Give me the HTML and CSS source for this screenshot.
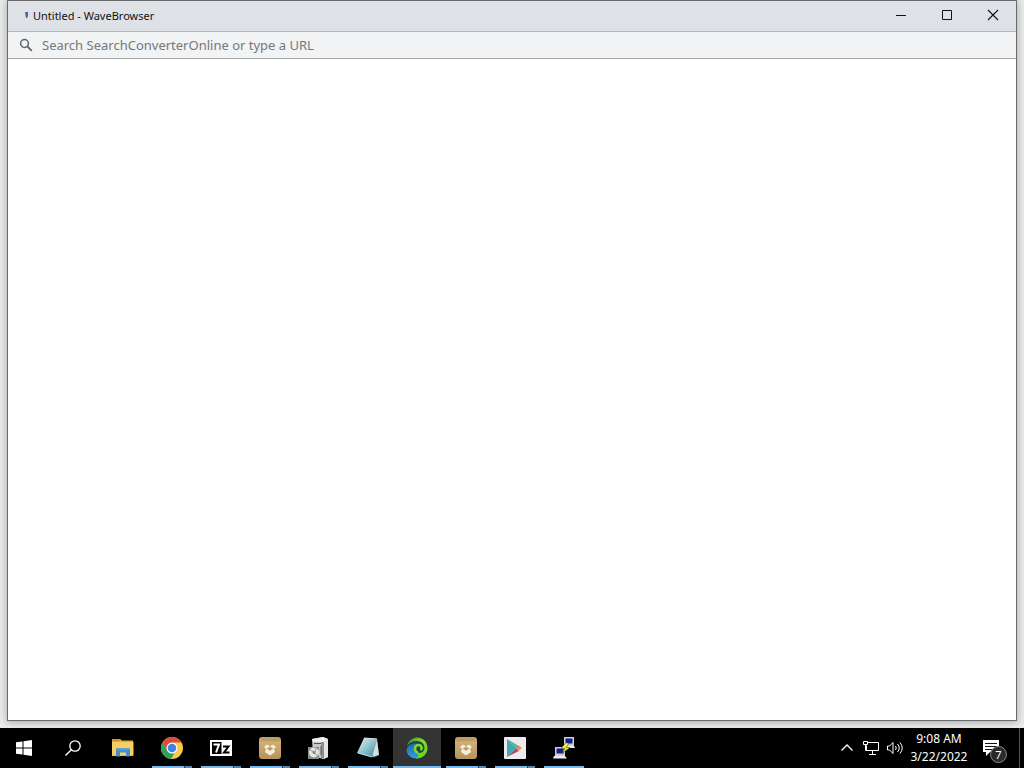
FILE: index.html
```html
<!DOCTYPE html>
<html lang="en">
<head>
<meta charset="utf-8">
<title>Untitled - WaveBrowser</title>
<link rel="stylesheet" href="styles.css">
</head>
<body>
<svg class="defs" aria-hidden="true">
  <defs>
    <linearGradient id="tan" x1="0" y1="0" x2="0" y2="1"><stop offset="0" stop-color="#a98345"/><stop offset=".25" stop-color="#cfae75"/><stop offset="1" stop-color="#b5935a"/></linearGradient>
    <linearGradient id="note" x1="0" y1="0" x2="1" y2="1"><stop offset="0" stop-color="#e4f4f6"/><stop offset=".5" stop-color="#8fc3cd"/><stop offset="1" stop-color="#3f8797"/></linearGradient>
    <linearGradient id="sea" x1="0" y1="0" x2="0" y2="1"><stop offset="0" stop-color="#2668a8"/><stop offset="1" stop-color="#2aa3e6"/></linearGradient>
    <linearGradient id="leaf" x1="0" y1="0" x2="1" y2="1"><stop offset="0" stop-color="#2f7f4b"/><stop offset=".45" stop-color="#86dc38"/><stop offset="1" stop-color="#62cf14"/></linearGradient>
    <symbol id="box" viewBox="0 0 24 24">
      <rect x="1" y="1" width="22" height="22" rx="3" fill="url(#tan)"/>
      <path d="M2 4q0-2 2-2h16q2 0 2 2" fill="none" stroke="#d0b27c"/>
      <path d="M9 8.500l3 2 3-2 3 2.500-2 2 1 3-5 3.500L7 16l1-3-2-2z" fill="#f6eedd"/>
      <path d="M12 10.500l3.500 2-3.500 2.500-3.500-2.500z" fill="#c09f68"/>
    </symbol>
  </defs>
</svg>
<main class="desktop">
  <section class="window">
    <header class="titlebar">
      <svg class="favicon" viewBox="0 0 4 8"><path d="M1 0h3v4L3 6H2z" fill="#4166b0"/></svg>
      <h1 class="title">Untitled - WaveBrowser</h1>
      <button class="control" aria-label="Minimize"><svg viewBox="0 0 12 12"><path d="M1 6.500h10" stroke="#111"/></svg></button>
      <button class="control" aria-label="Maximize"><svg viewBox="0 0 12 12"><path d="M1.500 1.500h9v9h-9z" fill="none" stroke="#111"/></svg></button>
      <button class="control" aria-label="Close"><svg viewBox="0 0 12 12"><path d="M1 1l10 10M11 1L1 11" stroke="#111" stroke-width="1.100"/></svg></button>
    </header>
    <form class="toolbar">
      <svg class="lens" viewBox="0 0 14 14"><circle cx="5.500" cy="5.500" r="3.900" fill="none" stroke="#5f6368" stroke-width="1.500"/><path d="M8.300 8.300l4.500 4.500" stroke="#5f6368" stroke-width="1.800"/></svg>
      <input class="address" type="text" aria-label="Address" placeholder="Search SearchConverterOnline or type a URL">
    </form>
    <div class="page"></div>
  </section>
</main>
<footer class="taskbar">
  <nav class="apps">
    <button class="app start" aria-label="Start"><svg class="small" viewBox="0 0 16 16"><path d="M0 2.300L6.500 1.400V7.500H0zM7.500 1.200L16 0v7.500H7.500zM0 8.500h6.500v6.100L0 13.700zM7.500 8.500H16V16l-8.500-1.200z" fill="#fff"/></svg></button>
    <button class="app search" aria-label="Search"><svg class="small" viewBox="0 0 16 16"><circle cx="10" cy="6" r="5.200" fill="none" stroke="#fff" stroke-width="1.300"/><path d="M6.300 9.700L.5 15.500" stroke="#fff" stroke-width="1.400"/></svg></button>
    <button class="app" aria-label="File Explorer"><svg viewBox="0 0 24 24"><path d="M1 3h8l2 1.500h11V20H1z" fill="#e0a93a"/><path d="M1 6h21.500v13.500H1z" fill="#f5cf63"/><path d="M1.500 4h7" stroke="#b98422"/><path d="M5 13.500q0-1.500 1.500-1.500h11q1.500 0 1.500 1.500V20.500h-4v-4H9v4H5z" fill="#4590c8"/><path d="M6 13h12" stroke="#69b4e3"/></svg></button>
    <button class="app open stack" aria-label="Chrome"><svg viewBox="0 0 24 24"><circle cx="12" cy="12" r="11" fill="#f7cd45"/><path d="M12 12L2.500 6.500A11 11 0 0 1 21.500 6.500H12z" fill="#db4b3c"/><path d="M2.500 6.500l4.700 8.200L12 7z" fill="#db4b3c"/><path d="M2.500 6.500A11 11 0 0 0 11 23l5-8.500-4 2-4.800-1.800z" fill="#2da157"/><circle cx="12" cy="12" r="5.500" fill="#fff"/><circle cx="12" cy="12" r="4.300" fill="#3e82e7"/></svg></button>
    <button class="app open stack" aria-label="7-Zip"><svg viewBox="0 0 24 24"><path d="M1 4h22v16H1z" fill="#fff"/><path d="M3 6h9.500v12H3z" fill="#000"/><path d="M4.500 8.500H10L7 16.500" fill="none" stroke="#fff" stroke-width="2"/><path d="M14 10.500h5.500l-4.500 6h5.500" fill="none" stroke="#000" stroke-width="2"/></svg></button>
    <button class="app open stack" aria-label="Archive tool"><svg><use href="#box"/></svg></button>
    <button class="app open stack" aria-label="Installer"><svg viewBox="0 0 24 24"><path d="M5 3l11-2 5 2v18l-5 2-10-3z" fill="#c9cac7"/><path d="M5 3l11-2 5 2-4 3L6 6z" fill="#f0f0ee"/><path d="M17 6l4-3v18l-4 2z" fill="#e4e4e2"/><path d="M14 6h3v16h-3z" fill="#8e8f8b"/><path d="M7 7.500h7M14 10v9" stroke="#555"/><path d="M1 11h11v12H1z" fill="#8b8c89"/><circle cx="7" cy="16.500" r="5" fill="#e6e7e2"/><path d="M3 14l4 2M8 17l3 4M9 12l-1 4" stroke="#999b96"/><circle cx="7" cy="16.500" r="1.500" fill="#85887f"/></svg></button>
    <button class="app open stack" aria-label="Notepad"><svg viewBox="0 0 24 24"><path d="M8 2l13 1 2 16-5 3z" fill="#34535b"/><path d="M8 2l13 1-5 18L1 17z" fill="url(#note)"/><path d="M21 3l2 16-7 2z" fill="#d3e1e2"/><path d="M8 2l13 1" stroke="#d9e9ea"/><path d="M2 17l14 4" stroke="#bde0e4"/></svg></button>
    <button class="app open active" aria-label="WaveBrowser" aria-current="true"><svg viewBox="0 0 24 24"><circle cx="12" cy="12" r="10" fill="#1f4a3c"/><path d="M1.500 14C3 8 9 6.500 13 8c-4 2-3 7 0 9l-1 5.500C6 22.500 2 19 1.500 14z" fill="url(#sea)"/><path d="M2 9.500C4 4 8 1.500 13 1.500c6 .5 9.500 5.500 9.500 10.500 0 6-5 11-12 10.500 2-1 3-3 2-6 4 1.500 7-1 7-5 0-4-4-7-8-6.500C7 5 4 7 2 9.500z" fill="url(#leaf)"/><path d="M13 17c-4-2-4-7 0-8 3-.5 5 3 2.500 5" fill="none" stroke="#7edb2b" stroke-width="2.500"/></svg></button>
    <button class="app open stack" aria-label="Archive tool"><svg><use href="#box"/></svg></button>
    <button class="app open stack" aria-label="Play Store"><svg viewBox="0 0 24 24"><rect x="1" y="1" width="22" height="22" rx="1" fill="#ececec"/><path d="M4 3l9 9-9 9z" fill="#3fa9b5"/><path d="M4 3l12 7-3 3z" fill="#54b7ac"/><path d="M4 21l9-9 3 3z" fill="#a0566b"/><path d="M13 12l3-2.500 3 2.500-3 2.500z" fill="#f58a4a"/></svg></button>
    <button class="app open" aria-label="PuTTY"><svg viewBox="0 0 24 24"><path d="M12 1h10v9H12z" fill="#d0d0d0"/><path d="M13.500 2.500h7v5h-7z" fill="#101c9c"/><path d="M12 10h10l1 2H11z" fill="#eee"/><path d="M3 11h10v9H3z" fill="#d0d0d0"/><path d="M4.500 12.500h7v5h-7z" fill="#101c9c"/><path d="M2 20h11l2 2.500H1z" fill="#eee"/><path d="M14 6.500l-5 6h4l-3 5 8-6h-4l3-4z" fill="#f4f52b" stroke="#303010" stroke-width=".5"/></svg></button>
  </nav>
  <div class="tray">
    <button class="tray-icon" aria-label="Show hidden icons"><svg viewBox="0 0 18 18"><path d="M3.500 11.500L9 6l5.500 5.500" fill="none" stroke="#fff" stroke-width="1.300"/></svg></button>
    <button class="tray-icon" aria-label="Network"><svg viewBox="0 0 18 18"><path d="M6 3.500h10.500v8H4.500v-5M10.500 12v3M7 15.500h7M1.500 2.500h4v3h-4zM3.500 6v5.500h3" fill="none" stroke="#fff"/></svg></button>
    <button class="tray-icon" aria-label="Volume"><svg viewBox="0 0 18 18"><path d="M1.500 7v4h2l3.500 3.500v-11L3.500 7zM9.500 7q1.500 2 0 4M11.500 5q3.500 4 0 8M14 3.500q4.500 5.500 0 11" fill="none" stroke="#fff"/></svg></button>
  </div>
  <div class="clock"><time>9:08 AM</time><time>3/22/2022</time></div>
  <button class="action" aria-label="Notifications"><svg viewBox="0 0 18 18"><path d="M1 1h16v12H8l-4 4v-4H1z" fill="#fff"/><path d="M3 4.500h12M3 7.500h12M3 10.500h8" stroke="#111"/></svg><span class="badge">7</span></button>
  <button class="show-desktop" aria-label="Show desktop"></button>
</footer>
</body>
</html>
```

FILE: styles.css
```css
* {
  box-sizing: border-box;
}

body {
  margin: 0;
  min-height: 100vh;
  display: flex;
  flex-direction: column;
  background: #e9e9e9;
  font-family: "Noto Sans", "Open Sans", sans-serif;
  font-size: 12px;
}

button {
  border: 0;
  padding: 0;
  background: none;
  color: inherit;
  font: inherit;
}

svg {
  display: block;
}

.defs {
  position: absolute;
  width: 0;
  height: 0;
}

.desktop {
  flex: 1;
  display: flex;
  padding: 0 7px 7px;
}

.window {
  flex: 1;
  display: flex;
  flex-direction: column;
  border: 1px solid #696a6d;
  background: #fff;
  box-shadow: 0 1px 7px rgba(0, 0, 0, 0.3);
}

.titlebar {
  display: flex;
  align-items: flex-start;
  height: 31px;
  padding-left: 16px;
  border-bottom: 1px solid #b5b7ba;
  background: #dee1e6;
}

.favicon {
  width: 4px;
  height: 8px;
  margin-top: 11px;
}

.title {
  flex: 1;
  margin: 0 0 0 5px;
  font-size: 11px;
  font-weight: 400;
  line-height: 29px;
  color: #111;
}

.control {
  display: grid;
  place-items: center;
  width: 46px;
  height: 28px;
}

.control svg {
  width: 12px;
  height: 12px;
}

.toolbar {
  display: flex;
  align-items: center;
  gap: 9px;
  height: 27px;
  padding: 0 11px;
  border-bottom: 1px solid #a9abad;
  background: #f1f3f4;
}

.lens {
  width: 14px;
  height: 14px;
}

.address {
  flex: 1;
  min-width: 0;
  padding: 0;
  border: 0;
  outline: 0;
  background: none;
  font: inherit;
  font-size: 13px;
}

.address::placeholder {
  color: #75787b;
  opacity: 1;
}

.page {
  flex: 1;
}

.taskbar {
  display: flex;
  height: 40px;
  background: #000;
  color: #fff;
}

.apps {
  flex: 1;
  display: flex;
  gap: 1px;
}

.app {
  position: relative;
  display: grid;
  place-items: center;
  width: 48px;
  height: 40px;
}

.app svg {
  width: 24px;
  height: 24px;
}

.app .small {
  width: 16px;
  height: 16px;
}

.search {
  margin-right: 1px;
}

.open::after {
  content: "";
  position: absolute;
  right: 4px;
  bottom: 0;
  left: 4px;
  height: 2px;
  background: #76b9ed;
}

.stack::after {
  background: linear-gradient(to right, #76b9ed 32px, #274056 32px, #274056 33px, #5587ae 33px);
}

.active {
  background: #333;
}

.active::after {
  right: 0;
  left: 0;
}

.tray {
  display: flex;
  align-items: center;
}

.tray-icon {
  display: grid;
  place-items: center;
  width: 24px;
  height: 40px;
}

.tray-icon svg {
  width: 18px;
  height: 18px;
}

.clock {
  display: flex;
  flex-direction: column;
  justify-content: center;
  align-items: center;
  width: 64px;
  line-height: 18px;
  font-size: 12px;
}

.action {
  position: relative;
  display: grid;
  place-items: center;
  width: 40px;
  margin-right: 8px;
}

.action svg {
  width: 18px;
  height: 18px;
}

.badge {
  position: absolute;
  right: 4px;
  bottom: 5px;
  width: 17px;
  height: 17px;
  border: 1px solid #8a8a8a;
  border-radius: 50%;
  background: #2b2b2b;
  font-size: 11px;
  line-height: 15px;
  text-align: center;
}

.show-desktop {
  width: 5px;
  border-left: 1px solid #555;
}
```
